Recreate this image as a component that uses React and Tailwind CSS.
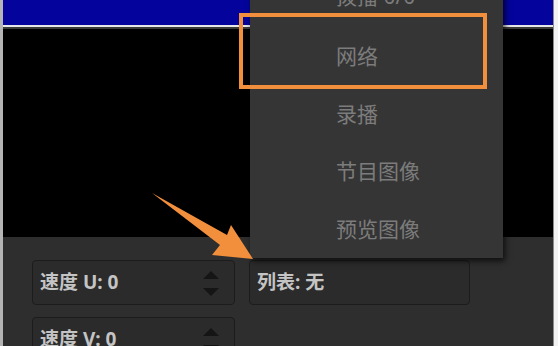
import React from 'react';

const menuItems = ['拨播 0/0', '网络', '录播', '节目图像', '预览图像'];

function Spinner() {
  return (
    <div className="flex flex-col items-center gap-[9px] pt-[1px]">
      <svg width="16" height="8" viewBox="0 0 16 8">
        <polygon points="8,0 16,8 0,8" fill="#151515" />
      </svg>
      <svg width="16" height="8" viewBox="0 0 16 8">
        <polygon points="0,0 16,0 8,8" fill="#151515" />
      </svg>
    </div>
  );
}

function Field({ label, spinner }) {
  return (
    <div className="flex h-[45px] shrink-0 items-center justify-between rounded-[4px] border border-[#1c1c1c] bg-[#2b2b2b] pl-[7px] pr-[15px]">
      <span className="text-[19px] font-bold text-[#c4c4c4]">{label}</span>
      {spinner && <Spinner />}
    </div>
  );
}

export default function App() {
  return (
    <div
      className="relative h-[346px] w-[558px] overflow-hidden bg-[#f2f2f2]"
      style={{ fontFamily: '"Noto Sans", "Noto Sans CJK SC", sans-serif' }}
    >
      <div className="flex h-full w-[554px] border-l-[3px] border-r border-l-[#b4b4b4] border-r-[#8a8a8a]">
        <div className="flex min-h-0 flex-1 flex-col">
          <div className="h-[25px] shrink-0 bg-[#04049c]" />
          <div className="h-[2px] shrink-0 bg-[#e6e6e6]" />
          <div className="h-[2px] shrink-0 bg-[#3a3a3a]" />
          <div className="h-[208px] shrink-0 bg-black" />
          <div className="flex min-h-0 flex-1 flex-col gap-[12px] overflow-hidden bg-[#2e2e2e] pl-[29px] pt-[23px]">
            <div className="flex shrink-0 gap-[14px]">
              <div className="w-[203px]">
                <Field label="速度 U: 0" spinner />
              </div>
              <div className="w-[221px]">
                <Field label="列表: 无" />
              </div>
            </div>
            <div className="w-[203px] shrink-0">
              <Field label="速度 V: 0" spinner />
            </div>
          </div>
        </div>
      </div>

      {/* dropdown menu */}
      <div className="absolute left-[250px] top-[-29px] w-[253px] bg-[#353535] shadow-[2px_3px_6px_rgba(0,0,0,0.7)]">
        {menuItems.map((item, i) => (
          <div
            key={item}
            className={`flex h-[57.4px] items-center pl-[86px] text-[21px] text-[#7c7c7c] ${i === 0 ? 'pb-[6px]' : ''}`}
          >
            {item}
          </div>
        ))}
      </div>

      {/* highlight box */}
      <div className="absolute left-[239px] top-[13px] h-[76px] w-[248px] border-[4px] border-[#f28f3c]" />

      {/* arrow */}
      <svg className="absolute left-0 top-0" width="558" height="346" viewBox="0 0 558 346">
        <polygon
          points="152,193 227,235 231,225 253,259 212,255 220,245"
          fill="#f28f3c"
        />
      </svg>
    </div>
  );
}
